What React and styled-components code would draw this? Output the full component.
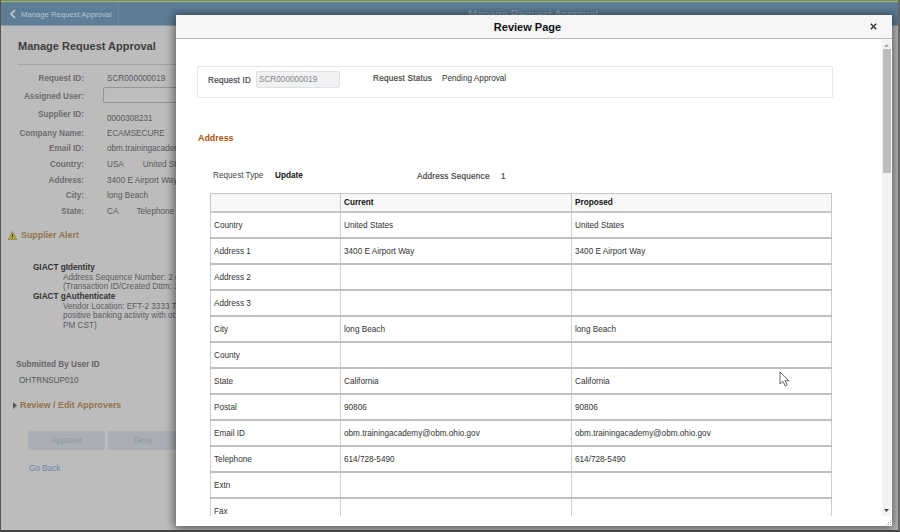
import React from "react";
import styled, { createGlobalStyle } from "styled-components";

const Global = createGlobalStyle`
  html, body { margin: 0; padding: 0; background: #3a3a3a; }
  * { box-sizing: border-box; }
  body { font-family: "Liberation Sans", Arial, sans-serif; }
`;

const Frame = styled.div`
  position: relative;
  width: 900px;
  height: 532px;
  overflow: hidden;
  display: flex;
  flex-direction: column;
  background: #bcbcbc;
  border-left: 1px solid #555;
  border-right: 2px solid #666;
  border-bottom: 2px solid #444;
`;
const Stripe = styled.div`
  height: 3px;
  flex: none;
  background: linear-gradient(#7d8f63 0 1px, #98b06e 1px 2px, #6f8a8c 2px);
`;
const AppBar = styled.header`
  height: 23px;
  flex: none;
  display: grid;
  grid-template-columns: 118px 1fr;
  background: #5d7d97;
  color: #b4c2ce;
  border-bottom: 1px solid #8c9aa6;
`;
const BackButton = styled.div`
  display: flex;
  align-items: center;
  gap: 5px;
  padding-left: 9px;
  border-right: 1px solid #6d8aa1;
  background: #5e7e98;
  font-size: 7.7px;
  white-space: nowrap;
`;
const BarTitle = styled.div`
  padding: 5px 0 0 349px;
  font-size: 11px;
  white-space: nowrap;
  color: #92a5b5;
`;
const Page = styled.main`
  flex: 1;
  padding-left: 17px;
  color: #5c5c5c;
  font-size: 8.2px;
  white-space: nowrap;
`;
const PageTitle = styled.h1`
  margin: 0;
  height: 39px;
  width: 158px;
  padding-top: 13px;
  font-size: 11px;
  line-height: 14px;
  color: #3e3e3e;
  border-bottom: 1px solid #a6a6a6;
`;
const Fields = styled.div`
  margin: 4px 0 0 -16px;
`;
const Field = styled.div`
  display: grid;
  grid-template-columns: 82px 1fr;
  column-gap: 23px;
  align-items: center;
  height: ${(p) => p.$h}px;
`;
const FieldLabel = styled.span`
  text-align: right;
  font-weight: 700;
  color: #6d6d6d;
  margin-top: ${(p) => (p.$flat ? 0 : 2)}px;
`;
const FieldValue = styled.span`
  display: flex;
  gap: ${(p) => p.$gap || 0}px;
  color: #5a5a5a;
  margin-top: ${(p) => (p.$down ? 8 : 2)}px;
`;
const AssignedInput = styled.div`
  width: 90px;
  height: 16px;
  margin-left: -4px;
  border: 1px solid #969696;
  border-radius: 2px;
  background: #bdbdbd;
`;
const SectionRow = styled.div`
  display: flex;
  align-items: center;
  margin: ${(p) => p.$m};
  gap: ${(p) => p.$gap}px;
`;
const SectionTitle = styled.span`
  font-size: 8.9px;
  font-weight: 700;
  color: #94734f;
`;
const Alerts = styled.div`
  margin: 23px 0 0 15px;
  line-height: 9.4px;
`;
const AlertTitle = styled.div`
  font-weight: 700;
  color: #333;
  line-height: 10px;
`;
const AlertText = styled.div`
  padding-left: 30px;
  color: #5c5c5c;
`;
const SubmittedLabel = styled.div`
  margin: 30px 0 0 -2px;
  font-weight: 700;
  color: #666;
  line-height: 10px;
`;
const SubmittedValue = styled.div`
  margin: 6px 0 0 1px;
  color: #555;
  line-height: 10px;
`;
const Buttons = styled.div`
  display: flex;
  gap: 3px;
  margin: 21px 0 0 10px;
`;
const DimButton = styled.div`
  width: ${(p) => p.$w}px;
  height: 19px;
  border-radius: 2px;
  background: #a9afb4;
  color: #8f959a;
  display: flex;
  align-items: center;
  justify-content: center;
`;
const GoBack = styled.div`
  margin: 14px 0 0 11px;
  color: #6b88ad;
`;

const Modal = styled.section`
  position: absolute;
  left: 175px;
  top: 15px;
  width: 716px;
  height: 511px;
  display: flex;
  flex-direction: column;
  background: #fff;
  box-shadow: 0 1px 9px 2px rgba(0, 0, 0, 0.5);
  color: #333;
  font-size: 8.2px;
  white-space: nowrap;
`;
const ModalHead = styled.div`
  position: relative;
  height: 24px;
  flex: none;
  padding-right: 13px;
  background: #f5f5f5;
  border-bottom: 1px solid #b6bcc3;
  display: flex;
  align-items: center;
  justify-content: center;
  font-size: 11px;
  font-weight: 700;
  color: #111;
`;
const CloseIcon = styled.svg`
  position: absolute;
  right: 15px;
  top: 8px;
`;
const ModalMain = styled.div`
  height: 477px;
  flex: none;
  display: flex;
`;
const Content = styled.div`
  flex: 1;
  overflow: hidden;
  padding: 27px 0 0 21px;
`;
const ScrollTrack = styled.div`
  width: 9px;
  margin-right: 1px;
  flex: none;
  background: #f3f3f3;
  display: flex;
  flex-direction: column;
  align-items: center;
`;
const ScrollThumb = styled.div`
  width: 8px;
  height: 124px;
  margin-top: 2px;
  background: #bdbdbd;
`;
const ScrollSpacer = styled.div`
  flex: 1;
`;
const Arrow = styled.svg`
  flex: none;
  margin: ${(p) => p.$m};
`;
const RequestBox = styled.div`
  width: 636px;
  height: 32px;
  border: 1px solid #e6e7ea;
  border-radius: 1px;
  display: flex;
  align-items: flex-start;
  padding-left: 10px;
`;
const BoxLabel = styled.span`
  color: #444;
  font-weight: 400;
  letter-spacing: 0.22px;
  -webkit-text-stroke: 0.2px #444;
`;
const RequestIdLabel = styled(BoxLabel)`
  margin-top: 9px;
  width: 42px;
`;
const ReadOnlyInput = styled.div`
  width: 84px;
  height: 17px;
  margin: 4px 0 0 6px;
  padding-left: 2px;
  display: flex;
  align-items: center;
  background: #f0f1f3;
  border: 1px solid #e0e1e4;
  border-radius: 2px;
  color: #888;
`;
const StatusLabel = styled(BoxLabel)`
  margin: 7px 0 0 33px;
  width: 59px;
`;
const StatusValue = styled.span`
  margin: 7px 0 0 10px;
  color: #333;
`;
const Heading = styled.h2`
  margin: 34px 0 0 1px;
  font-size: 8.9px;
  line-height: 12px;
  font-weight: 700;
  color: #a9540f;
`;
const MetaRow = styled.div`
  display: grid;
  grid-template-columns: 62px 142px 84px auto;
  justify-content: start;
  margin: 26px 0 0 16px;
  height: 12px;
  line-height: 11px;
`;
const MetaLabel = styled.span`
  color: #444;
`;
const MetaStrong = styled.span`
  color: #111;
  font-weight: 700;
`;
const MetaSeq = styled(BoxLabel)`
  margin-top: 1px;
`;
const MetaNum = styled.span`
  margin-top: 1px;
  color: #444;
  -webkit-text-stroke: 0.2px #444;
`;
const Table = styled.table`
  border-collapse: collapse;
  table-layout: fixed;
  width: 621px;
  margin: 11px 0 0 13px;
`;
const Th = styled.th`
  height: 18px;
  padding: 0 0 0 3px;
  background: #f7f7f7;
  text-align: left;
  font-size: 8.2px;
  color: #111;
  border: 1px solid #c4c8cd;
  border-bottom-width: 2px;
`;
const Td = styled.td`
  height: 26px;
  padding: 2px 0 0 3px;
  color: #333;
  border-left: 1px solid #ccd0d6;
  border-right: 1px solid #ccd0d6;
  border-bottom: 2px solid #bcc0c5;
`;
const ModalFoot = styled.div`
  flex: 1;
  position: relative;
`;
const Grip = styled.svg`
  position: absolute;
  right: 0;
  bottom: 0;
`;
const Cursor = styled.svg`
  position: absolute;
  left: 778px;
  top: 371px;
`;

const rows = [
  ["Country", "United States", "United States"],
  ["Address 1", "3400 E Airport Way", "3400 E Airport Way"],
  ["Address 2", "", ""],
  ["Address 3", "", ""],
  ["City", "long Beach", "long Beach"],
  ["County", "", ""],
  ["State", "California", "California"],
  ["Postal", "90806", "90806"],
  ["Email ID", "obm.trainingacademy@obm.ohio.gov", "obm.trainingacademy@obm.ohio.gov"],
  ["Telephone", "614/728-5490", "614/728-5490"],
  ["Extn", "", ""],
  ["Fax", "", ""],
];

export default function App() {
  return (
    <Frame>
      <Global />
      <Stripe />
      <AppBar>
        <BackButton>
          <svg width="6" height="10" viewBox="0 0 6 10">
            <path d="M5 1 1 5l4 4" fill="none" stroke="#c6d2dc" strokeWidth="1.5" />
          </svg>
          Manage Request Approval
        </BackButton>
        <BarTitle>Manage Request Approval</BarTitle>
      </AppBar>
      <Page>
        <PageTitle>Manage Request Approval</PageTitle>
        <Fields>
          <Field $h={17}><FieldLabel>Request ID:</FieldLabel><FieldValue>SCR000000019</FieldValue></Field>
          <Field $h={18}><FieldLabel>Assigned User:</FieldLabel><AssignedInput /></Field>
          <Field $h={20}><FieldLabel $flat>Supplier ID:</FieldLabel><FieldValue $down>0000308231</FieldValue></Field>
          <Field $h={16}><FieldLabel>Company Name:</FieldLabel><FieldValue>ECAMSECURE</FieldValue></Field>
          <Field $h={15}><FieldLabel>Email ID:</FieldLabel><FieldValue>obm.trainingacademy@obm.ohio.gov</FieldValue></Field>
          <Field $h={16}><FieldLabel>Country:</FieldLabel><FieldValue $gap={19}><span>USA</span><span>United States</span></FieldValue></Field>
          <Field $h={16}><FieldLabel>Address:</FieldLabel><FieldValue>3400 E Airport Way</FieldValue></Field>
          <Field $h={15}><FieldLabel>City:</FieldLabel><FieldValue>long Beach</FieldValue></Field>
          <Field $h={16}><FieldLabel>State:</FieldLabel><FieldValue $gap={18}><span>CA</span><span>Telephone</span></FieldValue></Field>
        </Fields>
        <SectionRow $m="12px 0 0 -10px" $gap={4}>
          <svg width="9" height="9" viewBox="0 0 9 9">
            <path d="M4.5.5 8.8 8.6H.2z" fill="#b3ad3e" stroke="#77742e" strokeWidth=".6" />
            <path d="M4.5 3v3M4.5 6.8v1" stroke="#333" strokeWidth=".9" />
          </svg>
          <SectionTitle>Supplier Alert</SectionTitle>
        </SectionRow>
        <Alerts>
          <AlertTitle>GIACT gIdentity</AlertTitle>
          <AlertText>Address Sequence Number: 2 of 2<br />(Transaction ID/Created Dttm: 1</AlertText>
          <AlertTitle>GIACT gAuthenticate</AlertTitle>
          <AlertText>Vendor Location: EFT-2 3333 T<br />positive banking activity with ot<br />PM CST)</AlertText>
        </Alerts>
        <SubmittedLabel>Submitted By User ID</SubmittedLabel>
        <SubmittedValue>OHTRNSUP010</SubmittedValue>
        <SectionRow $m="14px 0 0 -5px" $gap={3}>
          <svg width="4" height="7" viewBox="0 0 4 7"><path d="M0 0l4 3.5L0 7z" fill="#5b5b5b" /></svg>
          <SectionTitle>Review / Edit Approvers</SectionTitle>
        </SectionRow>
        <Buttons>
          <DimButton $w={77}>Approve</DimButton>
          <DimButton $w={70}>Deny</DimButton>
        </Buttons>
        <GoBack>Go Back</GoBack>
      </Page>
      <Modal>
        <ModalHead>
          Review Page
          <CloseIcon width="7" height="7" viewBox="0 0 7 7">
            <path d="M.8.8l5.4 5.4M6.2.8.8 6.2" stroke="#333" strokeWidth="1.4" />
          </CloseIcon>
        </ModalHead>
        <ModalMain>
          <Content>
            <RequestBox>
              <RequestIdLabel>Request ID</RequestIdLabel>
              <ReadOnlyInput>SCR000000019</ReadOnlyInput>
              <StatusLabel>Request Status</StatusLabel>
              <StatusValue>Pending Approval</StatusValue>
            </RequestBox>
            <Heading>Address</Heading>
            <MetaRow>
              <MetaLabel>Request Type</MetaLabel>
              <MetaStrong>Update</MetaStrong>
              <MetaSeq>Address Sequence</MetaSeq>
              <MetaNum>1</MetaNum>
            </MetaRow>
            <Table>
              <colgroup>
                <col width="130" />
                <col width="231" />
                <col width="260" />
              </colgroup>
              <thead>
                <tr><Th /><Th>Current</Th><Th>Proposed</Th></tr>
              </thead>
              <tbody>
                {rows.map((r) => (
                  <tr key={r[0]}>
                    <Td>{r[0]}</Td>
                    <Td>{r[1]}</Td>
                    <Td>{r[2]}</Td>
                  </tr>
                ))}
              </tbody>
            </Table>
          </Content>
          <ScrollTrack>
            <Arrow $m="5px 0 0" width="5" height="3" viewBox="0 0 5 3"><path d="M2.5 0 5 3H0z" fill="#a5a5a5" /></Arrow>
            <ScrollThumb />
            <ScrollSpacer />
            <Arrow $m="0 0 4px" width="5" height="3" viewBox="0 0 5 3"><path d="M0 0h5L2.5 3z" fill="#444" /></Arrow>
          </ScrollTrack>
        </ModalMain>
        <ModalFoot>
          <Grip width="7" height="7" viewBox="0 0 7 7">
            <path d="M5 1h1v1H5zM3 3h1v1H3zM5 3h1v1H5zM1 5h1v1H1zM3 5h1v1H3zM5 5h1v1H5z" fill="#aaa" />
          </Grip>
        </ModalFoot>
      </Modal>
      <Cursor width="12" height="17" viewBox="0 0 12 17">
        <path d="M1 1v12l3-2.6L6.2 15l2-1-2.1-4.3H10z" fill="#fff" stroke="#555" strokeWidth=".9" />
      </Cursor>
    </Frame>
  );
}
